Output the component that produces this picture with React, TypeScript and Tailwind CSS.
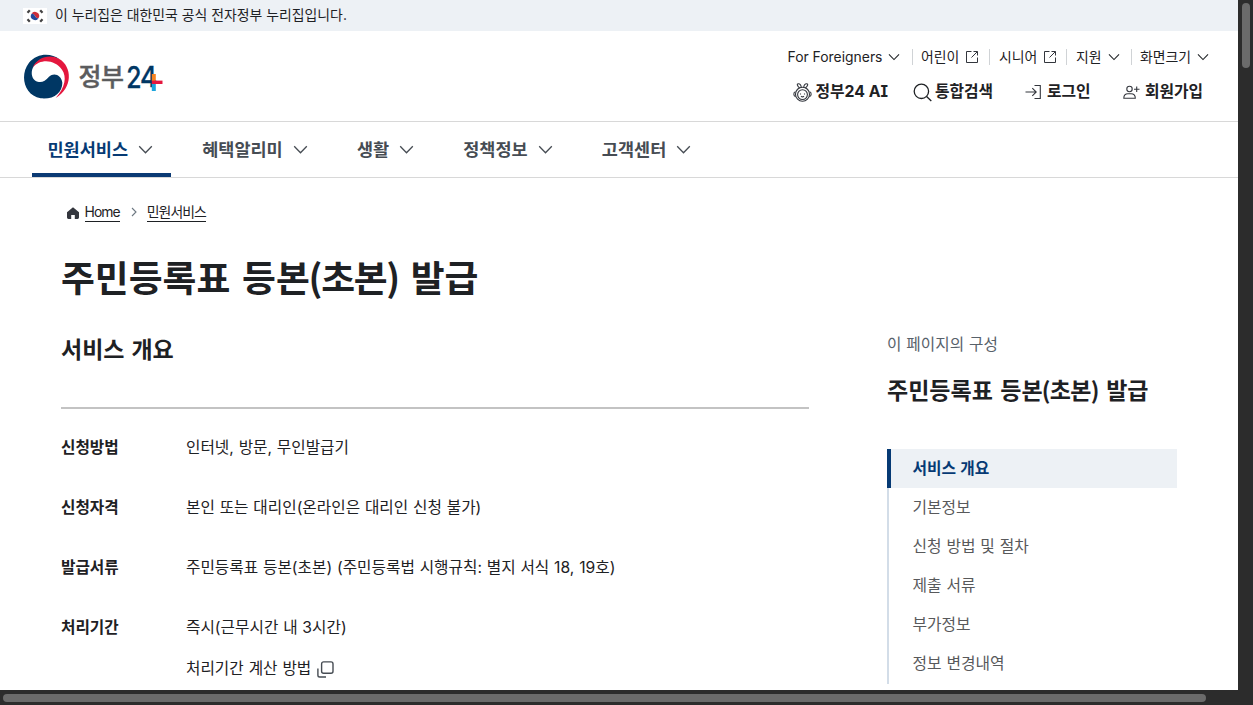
import type { ReactNode } from "react";
import clsx from "clsx";

const NAV_ITEMS = [
  { label: "민원서비스", active: true },
  { label: "혜택알리미", active: false },
  { label: "생활", active: false },
  { label: "정책정보", active: false },
  { label: "고객센터", active: false },
];

const OVERVIEW_ROWS = [
  { label: "신청방법", value: "인터넷, 방문, 무인발급기" },
  { label: "신청자격", value: "본인 또는 대리인(온라인은 대리인 신청 불가)" },
  { label: "발급서류", value: "주민등록표 등본(초본) (주민등록법 시행규칙: 별지 서식 18, 19호)" },
  { label: "처리기간", value: "즉시(근무시간 내 3시간)" },
];

const TOC_ITEMS = ["서비스 개요", "기본정보", "신청 방법 및 절차", "제출 서류", "부가정보", "정보 변경내역"];

export default function App() {
  return (
    <div className="flex h-[705px] w-[1253px] flex-col overflow-hidden bg-[#2c2c2c] font-['Inter','Noto_Sans_CJK_KR',sans-serif] text-[#1e2124]">
      <div className="flex h-[690px]">
        <div className="w-[1238px] overflow-hidden bg-white">
          <GovBanner />
          <Header />
          <MainNav />
          <main className="flex pl-[61px]">
            <ServiceOverview />
            <PageToc />
          </main>
        </div>
        <div className="flex w-[15px] justify-center pt-[3px]">
          <div className="h-[65px] w-2 rounded-full bg-[#6b6b6b]" />
        </div>
      </div>
      <div className="flex h-[15px] items-center pl-[3px]">
        <div className="h-2 w-[1203px] rounded-full bg-[#6b6b6b]" />
      </div>
    </div>
  );
}

function GovBanner() {
  return (
    <div className="flex h-[31px] items-center bg-[#edf1f5] pl-[23px]">
      <KoreaFlag />
      <p className="ml-2 text-[13.9px] whitespace-nowrap">이 누리집은 대한민국 공식 전자정부 누리집입니다.</p>
    </div>
  );
}

function Header() {
  return (
    <header className="flex h-[91px] justify-between border-b border-[#d8d8d8] pl-[23px]">
      <Logo />
      <div className="w-[451px] pt-4">
        <div className="flex h-5 items-center text-[13.9px] whitespace-nowrap">
          <UtilItem className="w-[125px] pl-[0.5px]" label="For Foreigners" icon={<Chevron size={12} />} />
          <UtilItem className="w-[77px] border-l pl-2" label="어린이" icon={<ExternalIcon />} />
          <UtilItem className="w-[77px] border-l pl-[9px]" label="시니어" icon={<ExternalIcon />} />
          <UtilItem className="w-[65px] border-l pl-[9px]" label="지원" icon={<Chevron size={12} />} />
          <UtilItem className="border-l pl-2" label="화면크기" icon={<Chevron size={12} />} />
        </div>
        <div className="mt-[13px] flex h-6 items-center text-[15.8px] font-bold whitespace-nowrap">
          <a className="flex w-[120px] items-center gap-1 pl-[5.5px]">
            <MascotIcon />
            <span className="[font-feature-settings:'cv08']">정부24 AI</span>
          </a>
          <a className="flex w-[113px] items-center gap-[3px] pl-1.5">
            <SearchIcon />
            통합검색
          </a>
          <a className="flex w-[98px] items-center gap-[5px] pl-[5px]">
            <LoginIcon />
            로그인
          </a>
          <a className="flex items-center gap-[5px] pl-[5px]">
            <JoinIcon />
            회원가입
          </a>
        </div>
      </div>
    </header>
  );
}

function UtilItem({ className, label, icon }: { className: string; label: string; icon: ReactNode }) {
  return (
    <a className={clsx("flex h-4 items-center gap-1.5 border-[#d0d3d6]", className)}>
      <span>{label}</span>
      {icon}
    </a>
  );
}

function MainNav() {
  return (
    <nav className="flex h-14 gap-[15.7px] border-b border-[#d8d8d8] pl-8">
      {NAV_ITEMS.map((item) => (
        <a
          key={item.label}
          className={clsx(
            "flex items-center gap-2.5 border-b-4 pt-1 pr-[18px] pl-[15.5px] text-[17.5px] font-bold whitespace-nowrap",
            item.active ? "border-[#0b3a74] text-[#063a74]" : "border-transparent text-[#464c53]"
          )}
        >
          <span className="pt-0.5">{item.label}</span>
          <span className="text-[#464c53]">
            <Chevron size={15} />
          </span>
        </a>
      ))}
    </nav>
  );
}

function ServiceOverview() {
  return (
    <section className="w-[748px]">
      <div className="mt-[22px] flex h-6 items-center pl-1.5 text-[13.9px] whitespace-nowrap">
        <svg className="mt-0.5 h-3 w-3" viewBox="0 0 12 12" aria-hidden="true">
          <path d="M6 0.2L12 5.2V10.6Q12 12 10.6 12H7.8V8H4.2V12H1.4Q0 12 0 10.6V5.2Z" fill="#33363d" />
        </svg>
        <a className="ml-[5.5px] border-b border-[#1e2124] leading-[18px] tracking-[-0.9px]">Home</a>
        <svg className="mr-2.5 ml-[11px] h-2.5 w-1.5" viewBox="0 0 6 10" fill="none" aria-hidden="true">
          <path d="M1 1L5 5L1 9" stroke="#6d7882" strokeWidth="1.1" />
        </svg>
        <a className="border-b border-[#1e2124] leading-[18px] tracking-[-1px]">민원서비스</a>
      </div>
      <h1 className="mt-[27px] font-['Noto_Sans_CJK_KR',sans-serif] text-[36.8px] leading-[50px] font-bold [word-spacing:3.5px] whitespace-nowrap">
        주민등록표 등<span className="tracking-[-1.3px]">본(초본)</span> 발급
      </h1>
      <h2 className="mt-[33px] text-[23px] leading-8 font-bold [word-spacing:1.5px]">서비스 개요</h2>
      <dl className="mt-[41px] border-t-2 border-[#c3c3c3] pt-[27px] text-[15.7px] whitespace-nowrap">
        {OVERVIEW_ROWS.map((row) => (
          <div key={row.label} className="mb-9 flex h-6 items-center last:mb-0">
            <dt className="w-[125px] font-bold">{row.label}</dt>
            <dd className="[word-spacing:0.4px]">{row.value}</dd>
          </div>
        ))}
      </dl>
      <a className="mt-[17px] ml-[125px] flex h-6 items-center gap-1.5 text-[15.7px] [word-spacing:0.5px]">
        처리기간 계산 방법
        <PopupIcon />
      </a>
    </section>
  );
}

function PageToc() {
  return (
    <aside className="ml-[78px] w-[290px] pt-[155px]">
      <p className="text-[15.7px] leading-6 text-[#58616a] [word-spacing:0.5px]">이 페이지의 구성</p>
      <h3 className="mt-4 font-['Noto_Sans_CJK_KR',sans-serif] text-[23px] leading-8 font-bold [word-spacing:2.2px] whitespace-nowrap">
        주민등록표 등<span className="tracking-[-0.7px]">본(초본)</span> 발급
      </h3>
      <ul className="mt-11 text-[15.8px] text-[#58595b] [word-spacing:0.4px]">
        {TOC_ITEMS.map((item, i) => (
          <li
            key={item}
            className={clsx(
              "flex h-[39.1px] items-center",
              i === 0
                ? "border-l-4 border-[#063a74] bg-[#edf1f5] pl-[21.5px] font-bold text-[#063a74]"
                : "border-l-2 border-[#d3dde8] pl-[23.5px]"
            )}
          >
            {item}
          </li>
        ))}
      </ul>
    </aside>
  );
}

function Logo() {
  return (
    <svg className="mt-[21px] h-[50px] w-[145px]" viewBox="23 52 145 50" aria-label="정부24">
      <g transform="scale(0.33333)">
        <path
          d="M178 177C155 159 112 157 87 188C58 226 72 285 122 295C162 299 187 278 187 248C184 226 163 216 147 230C136 242 126 249 113 245C94 239 90 215 102 197C119 172 150 168 178 177Z"
          fill="#003764"
        />
        <path
          d="M98 203C112 171 150 161 178 177C217 200 219 264 167 294C196 262 201 230 186 209C165 180 122 174 98 203Z"
          fill="#e4173e"
        />
      </g>
      <text x="78.5" y="86" fontSize="25" fontWeight="500" fill="#5b5c5e" stroke="#5b5c5e" strokeWidth="0.4" letterSpacing="-0.6">
        정부
      </text>
      <g fill="#003764" stroke="#003764" strokeWidth="0.3" fontWeight="500">
        <text transform="translate(126.2 87.8) scale(0.84 1)" fontSize="29.5">
          2
        </text>
        <text transform="translate(140 87.2) scale(0.92 1)" fontSize="28.5">
          4
        </text>
      </g>
      <path d="M153.8 74V81" stroke="#f58220" strokeWidth="4" />
      <path d="M153.8 83.5V91" stroke="#1ba5dc" strokeWidth="4" />
      <path d="M151.8 82.3H162.5" stroke="#e4173e" strokeWidth="3.4" />
    </svg>
  );
}

function KoreaFlag() {
  return (
    <svg className="h-4 w-6" viewBox="0 0 24 16" aria-hidden="true">
      <path d="M0 0H24V16H0Z" fill="#fff" />
      <path d="M8.4 6A4 4 0 0 1 15.6 10Q13.6 11 12 8T8.4 6Z" fill="#cd2e3a" />
      <path d="M8.4 6A4 4 0 0 0 15.6 10Q13.6 11 12 8T8.4 6Z" fill="#24489b" />
      <path d="M4.5 4.8L6.8 2.2M17.2 2.2L19.5 4.8M4.5 11.2L6.8 13.8M17.2 13.8L19.5 11.2" stroke="#444" strokeWidth="2.2" />
    </svg>
  );
}

function Chevron({ size }: { size: number }) {
  return (
    <svg width={size} height={size} viewBox="0 0 15 15" fill="none" aria-hidden="true">
      <path d="M1.2 4.2L7.5 10.7L13.8 4.2" stroke="currentColor" strokeWidth="1.3" />
    </svg>
  );
}

function ExternalIcon() {
  return (
    <svg className="h-3.5 w-3.5" viewBox="0 0 14 14" fill="none" stroke="#33363d" aria-hidden="true">
      <path d="M6.5 1.5H1.5V12.5H12.5V7.5M8.5 1.5H12.5V5.5M12.3 1.7L6.5 7.5" />
    </svg>
  );
}

function MascotIcon() {
  return (
    <svg className="h-[19px] w-[19px]" viewBox="0 0 19 19" fill="none" stroke="#33363d" strokeWidth="1.1" aria-hidden="true">
      <path d="M6.6 5C4 2.8 3.8 0.8 5.2 0.7C6.7 0.6 8 2.2 8.3 4.3M12.4 5C15 2.8 15.2 0.8 13.8 0.7C12.3 0.6 11 2.2 10.7 4.3" />
      <circle cx="9.5" cy="11.2" r="7" />
      <circle cx="9.5" cy="11.6" r="4.9" />
      <path d="M2.4 8.8C0.3 9.3 0.3 13.2 2.6 13.8M16.6 8.8C18.7 9.3 18.7 13.2 16.4 13.8M7.5 10.4V11.6M11.5 10.4V11.6M8 13.2Q9.5 14.6 11 13.2" />
    </svg>
  );
}

function SearchIcon() {
  return (
    <svg className="h-[19px] w-[19px]" viewBox="0 0 19 19" fill="none" stroke="#1e2124" strokeWidth="1.3" aria-hidden="true">
      <circle cx="8.4" cy="8.3" r="7.2" />
      <path d="M13.6 13.5L18.3 18" />
    </svg>
  );
}

function LoginIcon() {
  return (
    <svg className="h-4 w-[17px]" viewBox="0 0 17 16" fill="none" stroke="#33363d" strokeWidth="1.1" aria-hidden="true">
      <path d="M9.5 1.5H15.3V14.5H9.5M0.5 8H11M7.3 4.2L11.2 8L7.3 11.8" />
    </svg>
  );
}

function JoinIcon() {
  return (
    <svg className="h-[15px] w-[17px]" viewBox="0 0 17 15" fill="none" stroke="#33363d" strokeWidth="1.1" aria-hidden="true">
      <circle cx="6.5" cy="4" r="2.7" />
      <path d="M0.8 13.2C0.8 10.2 2.5 8.8 5 8.8H8C10.6 8.8 12.3 10.2 12.3 13.2ZM11 4.3H16.5M13.7 1.5V7" />
    </svg>
  );
}

function PopupIcon() {
  return (
    <svg className="h-[17px] w-[17px]" viewBox="0 0 17 17" fill="none" stroke="#464c53" strokeWidth="1.4" aria-hidden="true">
      <rect x="4.6" y="0.9" width="11.4" height="11.4" rx="2" />
      <path d="M0.9 7.5V14.2Q0.9 16 2.7 16H9" />
    </svg>
  );
}
